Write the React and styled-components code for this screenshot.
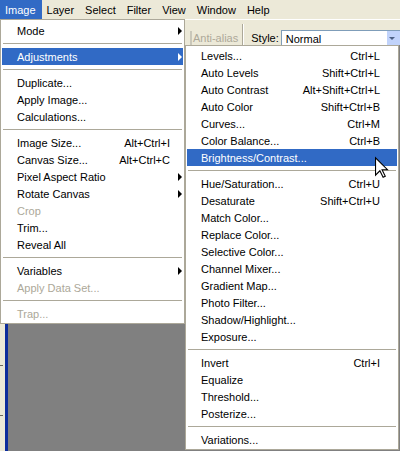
import React from "react";
import styled, { createGlobalStyle } from "styled-components";

const Global = createGlobalStyle`
  html, body { margin: 0; padding: 0; }
  body {
    width: 400px; height: 451px; overflow: hidden; background: #808080;
    font-family: "Liberation Sans", Arial, sans-serif; font-size: 11px; color: #000;
  }
`;

const Screen = styled.div`
  position: relative;
  width: 400px;
  height: 451px;
  overflow: hidden;
  display: flex;
  flex-direction: column;
`;

const MenuBar = styled.div`
  height: 19px;
  flex: none;
  display: flex;
  align-items: stretch;
  background: #ece9d8;
`;

const BarItem = styled.div`
  display: flex;
  align-items: center;
  padding: 0 6px 0 5px;
  color: ${(p) => (p.$active ? "#fff" : "#000")};
  background: ${(p) => (p.$active ? "#316ac5" : "transparent")};
`;

const OptionsBar = styled.div`
  height: 26px;
  flex: none;
  box-sizing: border-box;
  display: flex;
  align-items: flex-start;
  padding: 10px 0 0 190px;
  background: #ece9d8;
  border-top: 1px solid #fff;
  line-height: 16px;
`;

const CheckBox = styled.span`
  width: 9px;
  height: 13px;
  margin: 1px 1px 0 0;
  border: 1px solid #c9c7ba;
  background: #fff;
`;

const Label = styled.span`
  color: ${(p) => (p.$disabled ? "#aca899" : "#000")};
  white-space: nowrap;
`;

const VSep = styled.span`
  width: 1px;
  height: 22px;
  margin: -6px 7px 0 4px;
  border-left: 1px solid #aca899;
  border-right: 1px solid #fff;
`;

const Combo = styled.div`
  margin-left: 2px;
  width: 124px;
  height: 17px;
  flex: none;
  box-sizing: border-box;
  border: 1px solid #7f9db9;
  background: #fff;
  display: flex;
  align-items: center;
  padding-left: 4px;
`;

const ComboText = styled.span`
  flex: 1;
`;

const ComboButton = styled.span`
  width: 17px;
  height: 100%;
  background: #c1d3fb;
  display: flex;
  align-items: center;
  padding-left: 2px;
  box-sizing: border-box;
  &::before {
    content: "";
    border-top: 3px solid #4d6185;
    border-left: 3px solid transparent;
    border-right: 3px solid transparent;
  }
`;

const Workspace = styled.div`
  flex: 1;
  display: flex;
  position: relative;
`;

const Ruler = styled.div`
  width: 5px;
  background:
    repeating-linear-gradient(to bottom, transparent 0 20px, #6d6a5c 20px 21px, transparent 21px 50px) 0 0 / 3px 100% no-repeat,
    #ece9d8;
`;

const DocEdge = styled.div`
  width: 3px;
  background: #0c2c9c;
`;

const Canvas = styled.div`
  flex: 1;
  background: #808080;
`;

const Dropdown = styled.div`
  position: absolute;
  z-index: 2;
  left: ${(p) => p.$left}px;
  top: ${(p) => p.$top}px;
  width: ${(p) => p.$width}px;
  box-sizing: border-box;
  background: #fff;
  border: 1px solid #aca899;
  padding: ${(p) => p.$padTop}px 1px 1px;
  --indent: ${(p) => p.$indent}px;
  --slot: ${(p) => p.$slot}px;
`;

const Row = styled.div`
  height: 17px;
  display: flex;
  align-items: center;
  padding-left: var(--indent);
  white-space: nowrap;
  color: ${(p) => (p.$active ? "#fff" : p.$disabled ? "#aca899" : "#000")};
  background: ${(p) => (p.$active ? "#316ac5" : "transparent")};
`;

const RowLabel = styled.span`
  flex: 1;
`;

const Shortcut = styled.span`
  margin-left: 12px;
`;

const Slot = styled.span`
  width: var(--slot);
  flex: none;
  display: flex;
  justify-content: flex-end;
  padding-right: 1px;
  box-sizing: border-box;
`;

const Arrow = styled.span`
  width: 0;
  height: 0;
  border-left: 4px solid currentColor;
  border-top: 4px solid transparent;
  border-bottom: 4px solid transparent;
  ${(p) => (p.$active ? "" : "color: #000;")}
`;

const Separator = styled.div`
  height: 9px;
  display: flex;
  align-items: center;
  padding: 0 1px;
  &::after {
    content: "";
    flex: 1;
    height: 1px;
    background: #aca899;
  }
`;

const Cursor = styled.svg`
  position: absolute;
  z-index: 3;
  left: 375px;
  top: 157px;
  width: 13px;
  height: 21px;
  overflow: visible;
`;

const mainItems = [
  { label: "Mode", sub: true },
  "-",
  { label: "Adjustments", sub: true, active: true },
  "-",
  { label: "Duplicate..." },
  { label: "Apply Image..." },
  { label: "Calculations..." },
  "-",
  { label: "Image Size...", key: "Alt+Ctrl+I" },
  { label: "Canvas Size...", key: "Alt+Ctrl+C" },
  { label: "Pixel Aspect Ratio", sub: true },
  { label: "Rotate Canvas", sub: true },
  { label: "Crop", disabled: true },
  { label: "Trim..." },
  { label: "Reveal All" },
  "-",
  { label: "Variables", sub: true },
  { label: "Apply Data Set...", disabled: true },
  "-",
  { label: "Trap...", disabled: true },
];

const subItems = [
  { label: "Levels...", key: "Ctrl+L" },
  { label: "Auto Levels", key: "Shift+Ctrl+L" },
  { label: "Auto Contrast", key: "Alt+Shift+Ctrl+L" },
  { label: "Auto Color", key: "Shift+Ctrl+B" },
  { label: "Curves...", key: "Ctrl+M" },
  { label: "Color Balance...", key: "Ctrl+B" },
  { label: "Brightness/Contrast...", active: true },
  "-",
  { label: "Hue/Saturation...", key: "Ctrl+U" },
  { label: "Desaturate", key: "Shift+Ctrl+U" },
  { label: "Match Color..." },
  { label: "Replace Color..." },
  { label: "Selective Color..." },
  { label: "Channel Mixer..." },
  { label: "Gradient Map..." },
  { label: "Photo Filter..." },
  { label: "Shadow/Highlight..." },
  { label: "Exposure..." },
  "-",
  { label: "Invert", key: "Ctrl+I" },
  { label: "Equalize" },
  { label: "Threshold..." },
  { label: "Posterize..." },
  "-",
  { label: "Variations..." },
];

function Menu({ items, ...rest }) {
  return (
    <Dropdown {...rest}>
      {items.map((it, i) =>
        it === "-" ? (
          <Separator key={i} />
        ) : (
          <Row key={i} $active={it.active} $disabled={it.disabled}>
            <RowLabel>{it.label}</RowLabel>
            {it.key && <Shortcut>{it.key}</Shortcut>}
            <Slot>{it.sub && <Arrow $active={it.active} />}</Slot>
          </Row>
        )
      )}
    </Dropdown>
  );
}

export default function App() {
  return (
    <Screen>
      <Global />
      <MenuBar>
        {["Image", "Layer", "Select", "Filter", "View", "Window", "Help"].map((m) => (
          <BarItem key={m} $active={m === "Image"}>
            {m}
          </BarItem>
        ))}
      </MenuBar>
      <OptionsBar>
        <CheckBox />
        <Label $disabled>Anti-alias</Label>
        <VSep />
        <Label>Style:</Label>
        <Combo>
          <ComboText>Normal</ComboText>
          <ComboButton />
        </Combo>
      </OptionsBar>
      <Workspace>
        <Ruler />
        <DocEdge />
        <Canvas />
      </Workspace>

      <Menu items={mainItems} $left={0} $top={19} $width={185} $padTop={2} $indent={15} $slot={13} />
      <Menu items={subItems} $left={185} $top={45} $width={214} $padTop={1} $indent={14} $slot={17} />

      <Cursor viewBox="0 0 12 19">
        <path
          d="M0.5 0.5 L0.5 16.5 L4.5 12.5 L7.5 18.5 L9.5 17.5 L6.5 11.5 L11.5 11.5 Z"
          fill="#fff"
          stroke="#000"
          strokeWidth="1"
          strokeLinejoin="miter"
        />
      </Cursor>
    </Screen>
  );
}
